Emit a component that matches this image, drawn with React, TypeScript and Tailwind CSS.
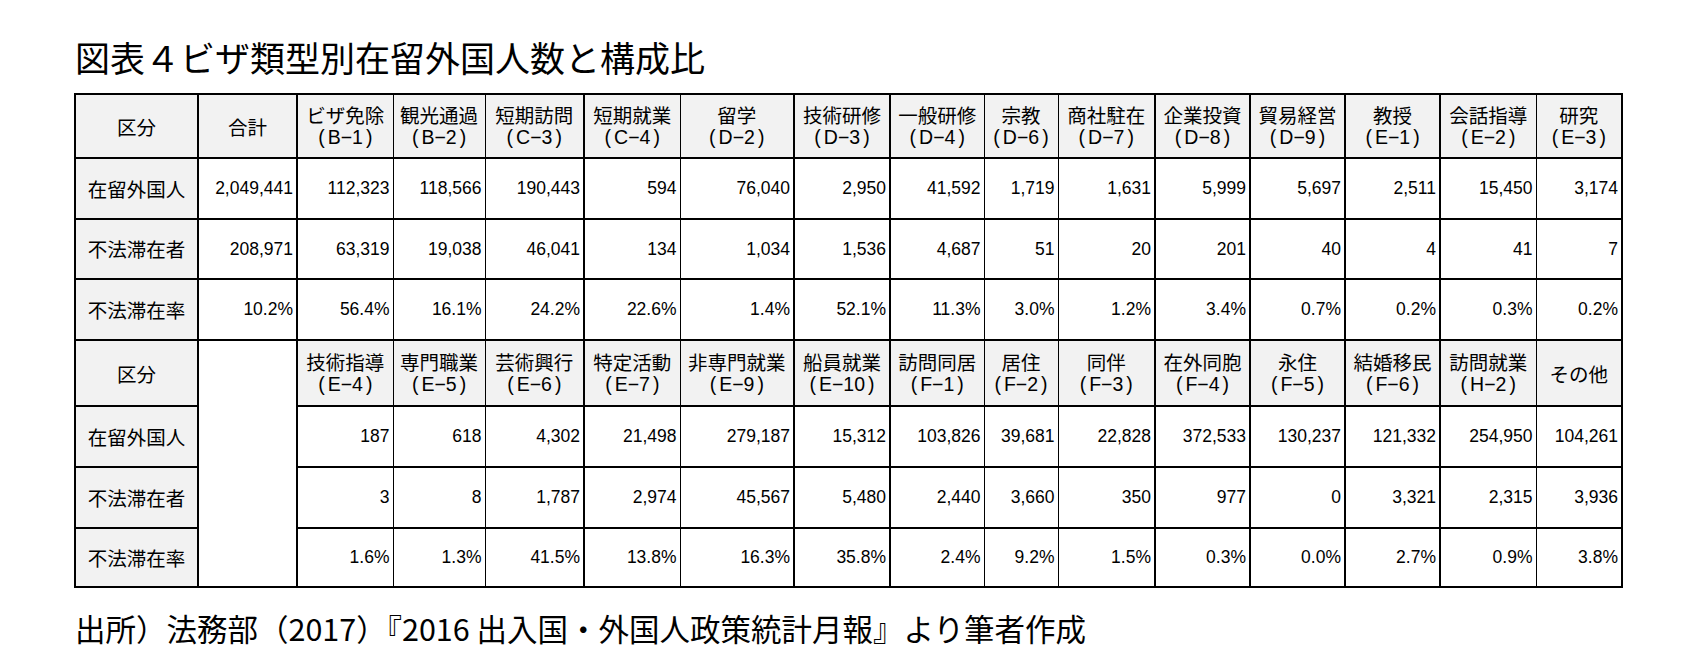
import React from "react";

// Column widths of the 16-column table, left to right.
const COL_W = [
  "w-[123px]",
  "w-[99px]",
  "w-[96px]",
  "w-[92px]",
  "w-[99px]",
  "w-[96px]",
  "w-[114px]",
  "w-[96px]",
  "w-[94px]",
  "w-[74px]",
  "w-[97px]",
  "w-[95px]",
  "w-[95px]",
  "w-[95px]",
  "w-[96px]",
  "w-[86px]",
];

// Scanned rule lines vary between 1px and 2px; keep that rhythm.
const THICK = new Set([0, 1, 4, 6, 7, 10, 11, 12, 13, 15]);
const rightBorder = (i: number) => (THICK.has(i) ? "border-r-2" : "border-r");

type Head = [string, string?];

const HEAD_1: Head[] = [
  ["区分"],
  ["合計"],
  ["ビザ免除", "B−1"],
  ["観光通過", "B−2"],
  ["短期訪問", "C−3"],
  ["短期就業", "C−4"],
  ["留学", "D−2"],
  ["技術研修", "D−3"],
  ["一般研修", "D−4"],
  ["宗教", "D−6"],
  ["商社駐在", "D−7"],
  ["企業投資", "D−8"],
  ["貿易経営", "D−9"],
  ["教授", "E−1"],
  ["会話指導", "E−2"],
  ["研究", "E−3"],
];

const ROWS_1: [string, string[]][] = [
  [
    "在留外国人",
    ["2,049,441", "112,323", "118,566", "190,443", "594", "76,040", "2,950", "41,592", "1,719", "1,631", "5,999", "5,697", "2,511", "15,450", "3,174"],
  ],
  [
    "不法滞在者",
    ["208,971", "63,319", "19,038", "46,041", "134", "1,034", "1,536", "4,687", "51", "20", "201", "40", "4", "41", "7"],
  ],
  [
    "不法滞在率",
    ["10.2%", "56.4%", "16.1%", "24.2%", "22.6%", "1.4%", "52.1%", "11.3%", "3.0%", "1.2%", "3.4%", "0.7%", "0.2%", "0.3%", "0.2%"],
  ],
];

const HEAD_2: Head[] = [
  ["技術指導", "E−4"],
  ["専門職業", "E−5"],
  ["芸術興行", "E−6"],
  ["特定活動", "E−7"],
  ["非専門就業", "E−9"],
  ["船員就業", "E−10"],
  ["訪問同居", "F−1"],
  ["居住", "F−2"],
  ["同伴", "F−3"],
  ["在外同胞", "F−4"],
  ["永住", "F−5"],
  ["結婚移民", "F−6"],
  ["訪問就業", "H−2"],
  ["その他"],
];

const ROWS_2: [string, string[]][] = [
  [
    "在留外国人",
    ["187", "618", "4,302", "21,498", "279,187", "15,312", "103,826", "39,681", "22,828", "372,533", "130,237", "121,332", "254,950", "104,261"],
  ],
  [
    "不法滞在者",
    ["3", "8", "1,787", "2,974", "45,567", "5,480", "2,440", "3,660", "350", "977", "0", "3,321", "2,315", "3,936"],
  ],
  [
    "不法滞在率",
    ["1.6%", "1.3%", "41.5%", "13.8%", "16.3%", "35.8%", "2.4%", "9.2%", "1.5%", "0.3%", "0.0%", "2.7%", "0.9%", "3.8%"],
  ],
];

const JP = "font-['Noto_Sans_CJK_JP','Noto_Sans_CJK_SC',sans-serif]";
const NUM = "font-['Liberation_Sans','Noto_Sans_CJK_JP',sans-serif]";

function HeadCell({ h, col }: { h: Head; col: number }) {
  return (
    <th
      className={`${rightBorder(col)} border-b-2 border-black bg-[#f2f2f2] p-0 text-center align-middle font-normal`}
    >
      <div className={`${JP} text-[19.5px] leading-[23px]`}>{h[0]}</div>
      {h[1] && (
        // the code's brackets sit loose, as in the scan
        <div className={`${NUM} text-[19.5px] leading-[23px]`}>
          (<span className="mx-[3px]">{h[1]}</span>)
        </div>
      )}
    </th>
  );
}

function LabelCell({ text }: { text: string }) {
  return (
    <td
      className={`${rightBorder(0)} border-b-2 border-black bg-[#f2f2f2] p-0 text-center align-middle ${JP} text-[19.5px]`}
    >
      {text}
    </td>
  );
}

function NumCell({ v, col }: { v: string; col: number }) {
  return (
    <td
      className={`${rightBorder(col)} border-b-2 border-black p-0 pr-[3px] text-right align-middle ${NUM} text-[17.5px]`}
    >
      {v}
    </td>
  );
}

export default function App() {
  return (
    <div className="h-[670px] w-[1699px] overflow-hidden bg-white pl-[74px] pt-[38px] text-black">
      <h1 className={`${JP} ml-px text-[35px] font-normal leading-[38px]`}>
        図表４ビザ類型別在留外国人数と構成比
      </h1>

      <table className="mt-[17px] table-fixed border-collapse border-2 border-black">
        <colgroup>
          {COL_W.map((w, i) => (
            <col key={i} className={w} />
          ))}
        </colgroup>
        <tbody>
          <tr className="h-[64px]">
            {HEAD_1.map((h, i) => (
              <HeadCell key={h[0]} h={h} col={i} />
            ))}
          </tr>
          {ROWS_1.map(([label, vals], r) => (
            <tr key={label} className={r === 1 ? "h-[60px]" : "h-[61px]"}>
              <LabelCell text={label} />
              {vals.map((v, i) => (
                <NumCell key={i} v={v} col={i + 1} />
              ))}
            </tr>
          ))}

          <tr className="h-[66px]">
            <HeadCell h={["区分"]} col={0} />
            {/* 合計 has no counterpart in the lower block: one blank cell down the side. */}
            <td rowSpan={4} className={`${rightBorder(1)} border-b-2 border-black bg-white p-0`} />
            {HEAD_2.map((h, i) => (
              <HeadCell key={h[0]} h={h} col={i + 2} />
            ))}
          </tr>
          {ROWS_2.map(([label, vals], r) => (
            <tr key={label} className={r === 2 ? "h-[59px]" : "h-[61px]"}>
              <LabelCell text={label} />
              {vals.map((v, i) => (
                <NumCell key={i} v={v} col={i + 2} />
              ))}
            </tr>
          ))}
        </tbody>
      </table>

      <p className={`${JP} ml-px mt-[23px] text-[30.5px] leading-[34px]`}>
        出所）法務部（2017）『2016 出入国・外国人政策統計月報』より筆者作成
      </p>
    </div>
  );
}
